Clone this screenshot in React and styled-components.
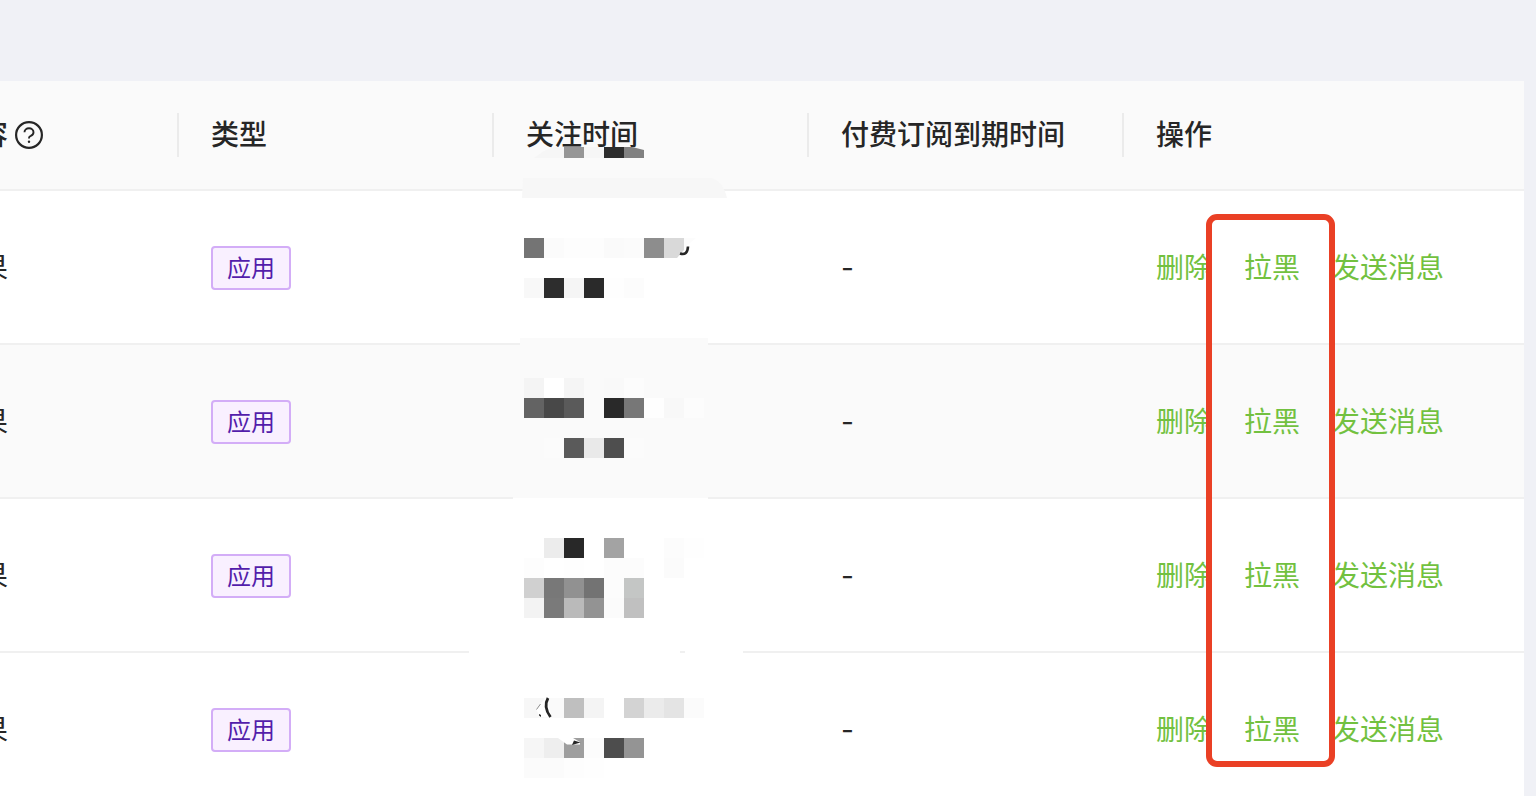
import styled, { createGlobalStyle } from 'styled-components';

const rows = [
  { id: 1, content: '果', type: '应用', expire: '-' },
  { id: 2, content: '果', type: '应用', expire: '-' },
  { id: 3, content: '果', type: '应用', expire: '-' },
  { id: 4, content: '果', type: '应用', expire: '-' },
];

const TILE = 20;

// [x, y, color]
const tiles = [
  [524, 238, '#747474'], [544, 238, '#fbfbfb'], [564, 238, '#fdfdfd'], [584, 238, '#fdfdfd'],
  [604, 238, '#fafafa'], [624, 238, '#fbfbfb'], [644, 238, '#8d8d8d'],
  [524, 278, '#f8f8f8'], [544, 278, '#2d2d2d'], [564, 278, '#f5f5f5'], [584, 278, '#2a2a2a'],
  [604, 278, '#fefefe'], [624, 278, '#fcfcfc'],

  [524, 378, '#f4f4f4'], [544, 378, '#ffffff'], [564, 378, '#f5f5f5'], [604, 378, '#f9f9f9'],
  [624, 378, '#fcfcfc'],
  [524, 398, '#636363'], [544, 398, '#484848'], [564, 398, '#5a5a5a'], [584, 398, '#fafafa'],
  [604, 398, '#292929'], [624, 398, '#777777'], [644, 398, '#fefefe'], [664, 398, '#f8f8f8'],
  [684, 398, '#fcfcfc'],
  [544, 438, '#fbfbfb'], [564, 438, '#5a5a5a'], [584, 438, '#e9e9e9'], [604, 438, '#4e4e4e'],
  [624, 438, '#fbfbfb'],

  [544, 538, '#ececec'], [564, 538, '#282828'], [604, 538, '#a3a3a3'], [664, 538, '#fcfcfc'],
  [684, 538, '#fefefe'],
  [524, 558, '#fdfdfd'], [564, 558, '#fefefe'], [604, 558, '#fcfcfc'], [624, 558, '#fcfcfc'],
  [664, 558, '#fbfbfb'],
  [524, 578, '#d0d0d0'], [544, 578, '#787878'], [564, 578, '#919191'], [584, 578, '#737373'],
  [604, 578, '#fcfcfc'], [624, 578, '#c4c6c5'],
  [524, 598, '#f3f3f3'], [544, 598, '#7a7a7a'], [564, 598, '#bababa'], [584, 598, '#939393'],
  [604, 598, '#fbfbfb'], [624, 598, '#c0c0c0'],

  [524, 698, '#f7f7f7'], [544, 698, '#fafafa'], [564, 698, '#bfbfbf'], [584, 698, '#f4f4f4'],
  [624, 698, '#d3d3d3'], [644, 698, '#ebebeb'], [664, 698, '#e4e4e4'], [684, 698, '#fbfbfb'],
  [524, 738, '#f6f6f6'], [544, 738, '#eeeeee'], [564, 738, '#9e9e9e'], [584, 738, '#fcfcfc'],
  [604, 738, '#4d4d4d'], [624, 738, '#949494'],
  [524, 758, '#fbfbfb'], [544, 758, '#fbfbfb'], [564, 758, '#fdfdfd'], [584, 758, '#fefefe'],
];

const HelpIcon = () => (
  <HelpSvg viewBox="0 0 28 28" role="img" aria-label="帮助">
    <circle cx="14" cy="14" r="12.9" fill="none" stroke="#262626" strokeWidth="2.2" />
    <path
      d="M9.5 11.3c0-2.4 2-4 4.500-4s4.500 1.600 4.500 4c0 1.700-1 2.900-2.700 3.600-1.100.4-1.800 1-1.800 2.100v.6"
      fill="none"
      stroke="#262626"
      strokeWidth="1.9"
    />
    <circle cx="14" cy="20.7" r="1.2" fill="#262626" />
  </HelpSvg>
);

const Mosaic = () => (
  <MosaicSvg viewBox="460 141 300 655" aria-hidden="true">
    {/* header */}
    <path d="M534 158 544 151 554 147H632L644 150V158Z" fill="#f6f6f6" />
    <rect x="564" y="147" width="20" height="11" fill="#969696" />
    <rect x="604" y="147" width="20" height="11" fill="#2d2d2d" />
    <path d="M624 147H632L644 150V158H624Z" fill="#818181" />
    <path d="M522 198 523 178H711Q723 181 727 198Z" fill="#f7f7f7" />

    {/* patches over the row borders */}
    <path d="M520 338H708V345H520Z" fill="#fafafa" />
    <path d="M513 497H708V498H513Z" fill="#fafafa" />
    <path d="M513 498H708V499H513Z" fill="#ffffff" />
    <path d="M469 651H680V653H469ZM685 651H743V653H685Z" fill="#ffffff" />

    {tiles.map(([x, y, color]) => (
      <rect key={`${x}-${y}`} x={x} y={y} width={TILE} height={TILE} fill={color} />
    ))}

    {/* leftovers of the covered digits */}
    <path d="M664 238H684V250L677 258H664Z" fill="#d9d9d9" />
    <path d="M684 238H696L684 248Z" fill="#fcfcfc" />
    <path d="M680 253.5Q687.5 256 688 246.5" fill="none" stroke="#262626" strokeWidth="2.6" />
    <path d="M541 703 536 709 540 717H552L546 698Z" fill="#ffffff" />
    <path d="M540.5 704 536.5 709.5" fill="none" stroke="#8c8c8c" strokeWidth="1" />
    <path d="M539 714 541 715V717L539 715.5Z" fill="#262626" />
    <path d="M548 698Q543 707 550.5 717" fill="none" stroke="#262626" strokeWidth="2.8" />
    <path d="M558 738H573L580 742V744.5H567Z" fill="#ffffff" />
    <path d="M574 740.5 580.5 742.5 572 745Z" fill="#262626" />
  </MosaicSvg>
);

const App = () => {
  const stop = (e) => e.preventDefault();

  return (
    <Page>
      <GlobalStyle />
      <TableWrapper>
        <Table>
          <colgroup>
            <Col $width={199} />
            <Col $width={315} />
            <Col $width={315} />
            <Col $width={315} />
            <Col />
          </colgroup>
          <thead>
            <tr>
              <HeadCell $flush>
                <HeadInner $divider>
                  容
                  <HelpIcon />
                </HeadInner>
              </HeadCell>
              <HeadCell>
                <HeadInner $divider>类型</HeadInner>
              </HeadCell>
              <HeadCell>
                <HeadInner $divider>关注时间</HeadInner>
              </HeadCell>
              <HeadCell>
                <HeadInner $divider>付费订阅到期时间</HeadInner>
              </HeadCell>
              <HeadCell>
                <HeadInner>操作</HeadInner>
              </HeadCell>
            </tr>
          </thead>
          <tbody>
            {rows.map((row, index) => (
              <Row key={row.id} $active={index === 1}>
                <Cell $flush>{row.content}</Cell>
                <Cell>
                  <Tag>{row.type}</Tag>
                </Cell>
                <Cell />
                <Cell>{row.expire}</Cell>
                <Cell>
                  <Actions>
                    <ActionLink href="#delete" onClick={stop}>删除</ActionLink>
                    <ActionLink href="#block" onClick={stop}>拉黑</ActionLink>
                    <ActionLink href="#message" onClick={stop}>发送消息</ActionLink>
                  </Actions>
                </Cell>
              </Row>
            ))}
          </tbody>
        </Table>
        <Mosaic />
        <Highlight />
      </TableWrapper>
    </Page>
  );
};

const GlobalStyle = createGlobalStyle`
  * {
    box-sizing: border-box;
  }

  body {
    margin: 0;
    background: #f0f1f6;
    font-family: Inter, 'Noto Sans CJK SC', sans-serif;
    color: #262626;
  }
`;

const Page = styled.div`
  height: 100vh;
  padding: 81px 12px 0 0;
  overflow: hidden;
`;

const TableWrapper = styled.div`
  position: relative;
  overflow: hidden;
  background: #ffffff;
`;

const Table = styled.table`
  width: calc(100% + 20px);
  margin-left: -20px;
  table-layout: fixed;
  border-collapse: separate;
  border-spacing: 0;
  font-size: 28px;
  line-height: 44px;
`;

const Col = styled.col`
  width: ${props => props.$width ? `${props.$width}px` : 'auto'};
`;

const HeadCell = styled.th`
  padding: 32px 0 32px ${props => props.$flush ? '0' : '32px'};
  border-bottom: 2px solid #f0f0f0;
  background: #fafafa;
  font-weight: 500;
  text-align: left;
  white-space: nowrap;
`;

const HeadInner = styled.div`
  display: flex;
  align-items: center;
  gap: 7px;
  height: 44px;
  line-height: 46px;
  border-right: ${props => props.$divider ? '2px solid #ebebeb' : 'none'};
`;

const HelpSvg = styled.svg`
  width: 28px;
  height: 28px;
`;

const Row = styled.tr`
  background: ${props => props.$active ? '#fafafa' : '#ffffff'};
`;

const Cell = styled.td`
  height: 154px;
  padding: 2px 0 0 ${props => props.$flush ? '0' : '32px'};
  border-bottom: 2px solid #f0f0f0;
  vertical-align: middle;
`;

const Tag = styled.span`
  display: block;
  width: fit-content;
  padding: 2px 14px 0;
  border: 2px solid #d3adf7;
  border-radius: 4px;
  background: #f9f0ff;
  color: #531dab;
  font-size: 24px;
  line-height: 38px;
`;

const Actions = styled.div`
  display: flex;
  gap: 32px;
`;

const ActionLink = styled.a`
  color: #72c140;
  text-decoration: none;
  white-space: nowrap;

  &:hover {
    color: #95d65c;
  }
`;

const MosaicSvg = styled.svg`
  position: absolute;
  top: 60px;
  left: 460px;
  width: 300px;
  height: 655px;
  pointer-events: none;
`;

const Highlight = styled.div`
  position: absolute;
  top: 133px;
  left: 1206px;
  width: 129px;
  height: 553px;
  border: 6px solid #ea4025;
  border-radius: 11px;
  pointer-events: none;
`;

export default App;
